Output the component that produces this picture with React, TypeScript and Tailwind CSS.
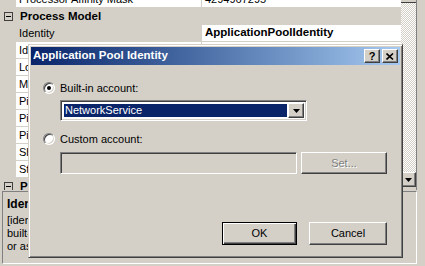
import React from "react";

const raised =
  "border border-t-white border-l-white border-r-[#404040] border-b-[#404040] shadow-[inset_-1px_-1px_#808080,inset_1px_1px_#d4d0c8]";
const sunken =
  "border border-t-[#808080] border-l-[#808080] border-r-white border-b-white shadow-[inset_1px_1px_#404040,inset_-1px_-1px_#d4d0c8]";

function Arrow() {
  return (
    <svg width="7" height="4" viewBox="0 0 7 4">
      <path d="M0 0h7L3.5 4z" fill="#000" />
    </svg>
  );
}

function Minus() {
  return (
    <div className="w-[9px] h-[9px] border border-[#404040] flex items-center justify-center">
      <div className="w-[5px] h-[1px] bg-black" />
    </div>
  );
}

function Radio({ checked }: { checked?: boolean }) {
  return (
    <div className="w-[12px] h-[12px] rounded-full border border-t-[#808080] border-l-[#808080] border-r-white border-b-white bg-white shadow-[inset_1px_1px_#404040,inset_-1px_-1px_#d4d0c8] flex items-center justify-center">
      {checked && <div className="w-[4px] h-[4px] rounded-full bg-black" />}
    </div>
  );
}

function PropRow({ name, value, selected, bold }: { name: string; value: string; selected?: boolean; bold?: boolean }) {
  return (
    <div className="flex h-[17px] shrink-0">
      <div className="w-[16px] bg-[#d4d0c8]" />
      <div
        className={`w-[186px] border-r border-b border-[#d4d0c8] pl-[3px] flex items-center whitespace-nowrap overflow-hidden ${
          selected ? "bg-[#d4d0c8]" : "bg-white"
        }`}
      >
        {name}
      </div>
      <div
        className={`flex-1 bg-white border-b border-[#d4d0c8] pl-[3px] flex items-center whitespace-nowrap overflow-hidden ${
          bold ? "font-bold text-[11.5px]" : ""
        }`}
      >
        {value}
      </div>
    </div>
  );
}

function Category({ label }: { label: string }) {
  return (
    <div className="flex h-[17px] shrink-0 items-center bg-[#d4d0c8]">
      <div className="ml-[4px] mr-[7px]">
        <Minus />
      </div>
      <span className="font-bold text-[11.5px]">{label}</span>
    </div>
  );
}

export default function App() {
  const rows: [string, string][] = [
    ["Idle Time-out (minutes)", "20"],
    ["Load User Profile", "False"],
    ["Maximum Worker Processes", "1"],
    ["Ping Enabled", "True"],
    ["Ping Maximum Response Time (seconds)", "90"],
    ["Ping Period (seconds)", "30"],
    ["Shutdown Time Limit (seconds)", "90"],
    ["Startup Time Limit (seconds)", "90"],
  ];
  return (
    <div className="relative w-[425px] h-[266px] overflow-hidden bg-[#d4d0c8] text-[11px] text-black font-['Liberation_Sans',Arial,sans-serif] leading-none">
      <div className="flex flex-col h-full">
        {/* property grid */}
        <div className="flex h-[190px] w-[417px] border-r border-[#808080] shrink-0">
          <div className="flex-1 flex flex-col overflow-hidden">
            <div className="flex flex-col -mt-[9px]">
              <PropRow name="Processor Affinity Mask" value="4294967295" />
              <Category label="Process Model" />
              <PropRow name="Identity" value="ApplicationPoolIdentity" selected bold />
              {rows.map(([n, v]) => (
                <PropRow key={n} name={n} value={v} />
              ))}
              <Category label="Process Orphaning" />
            </div>
          </div>
          <div className="w-[15px] flex flex-col">
            <div className="h-[3px] bg-[#d4d0c8] border-b border-[#404040]" />
            <div className="flex-1 bg-[repeating-conic-gradient(#d4d0c8_0_25%,#ffffff_0_50%)] bg-[length:2px_2px]" />
            <div className={`h-[15px] bg-[#d4d0c8] flex items-center justify-center ${raised}`}>
              <Arrow />
            </div>
            <div className="h-[3px]" />
          </div>
        </div>
        {/* description pane */}
        <div className="mt-[1px] ml-[2px] w-[415px] h-[73px] border border-t-[#808080] border-l-[#808080] border-r-white border-b-white px-[4px] pt-[6px] overflow-hidden whitespace-nowrap">
          <div className="font-bold text-[12px] h-[13px]">Identity</div>
          <div className="mt-[3px] leading-[13px]">
            <div>[identityType, username, password] Configures the application pool to run as</div>
            <div>built-in account, i.e. Application Pool Identity (recommended), Network Service,</div>
            <div>or as a specific user identity.</div>
          </div>
        </div>
      </div>

      {/* dialog */}
      <div className="absolute left-[28px] top-[44px] w-[375px] h-[214px] bg-[#d4d0c8] border border-t-[#d4d0c8] border-l-[#d4d0c8] border-r-[#404040] border-b-[#404040] shadow-[inset_1px_1px_#fff,inset_-1px_-1px_#808080] p-[2px] flex flex-col">
        <div className="h-[18px] bg-linear-to-r from-[#0a246a] to-[#a6caf0] flex items-center pl-[2px] pr-[2px] shrink-0">
          <span className="text-white font-bold text-[11.5px] flex-1">Application Pool Identity</span>
          <div className={`w-[16px] h-[14px] bg-[#d4d0c8] flex items-center justify-center font-bold text-[11px] ${raised}`}>?</div>
          <div className={`ml-[2px] w-[16px] h-[14px] bg-[#d4d0c8] flex items-center justify-center ${raised}`}>
            <svg width="8" height="7" viewBox="0 0 8 7">
              <path d="M0.5 0.5L7 6.5M7 0.5L0.5 6.5" stroke="#000" strokeWidth="1.6" />
            </svg>
          </div>
        </div>
        <div className="flex flex-col pl-[12px] pr-[13px]">
          <div className="mt-[17px] h-[12px] flex items-center">
            <Radio checked />
            <span className="ml-[5px]">Built-in account:</span>
          </div>
          <div className={`mt-[6px] ml-[17px] w-[247px] h-[21px] bg-white flex p-[2px] ${sunken}`}>
            <div className="flex-1 m-[1px] bg-[#0a246a] text-white flex items-center pl-[1px]">NetworkService</div>
            <div className={`w-[16px] bg-[#d4d0c8] flex items-center justify-center ${raised}`}>
              <Arrow />
            </div>
          </div>
          <div className="mt-[12px] h-[12px] flex items-center">
            <Radio />
            <span className="ml-[5px]">Custom account:</span>
          </div>
          <div className="mt-[7px] flex items-center">
            <div className={`ml-[17px] w-[237px] h-[22px] bg-[#d4d0c8] ${sunken}`} />
            <div className={`ml-[4px] w-[86px] h-[22px] bg-[#d4d0c8] flex items-center justify-center text-[#808080] [text-shadow:1px_1px_#fff] ${raised}`}>
              Set...
            </div>
          </div>
          <div className="mt-[48px] flex justify-end gap-[12px]">
            <div className="w-[75px] h-[23px] border border-black shadow-[inset_1px_1px_#fff,inset_-1px_-1px_#404040,inset_-2px_-2px_#808080] flex items-center justify-center">
              OK
            </div>
            <div className={`w-[78px] h-[23px] flex items-center justify-center ${raised}`}>Cancel</div>
          </div>
        </div>
      </div>
    </div>
  );
}
